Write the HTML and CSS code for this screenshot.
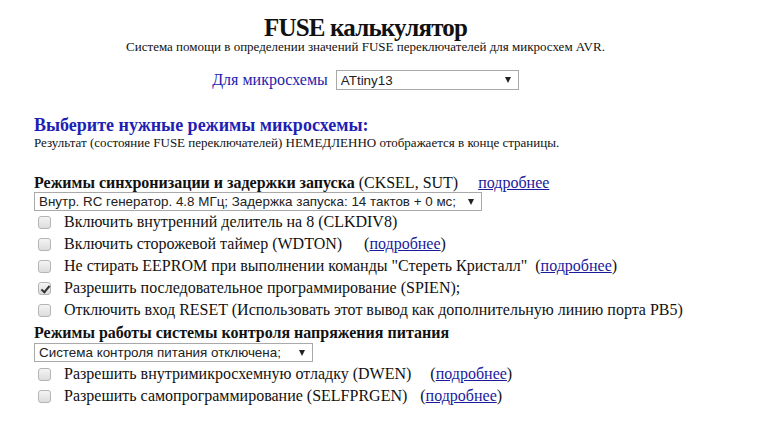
FILE: index.html
```html
<!DOCTYPE html>
<html lang="ru">
<head>
    <meta charset="UTF-8">
    <title>FUSE калькулятор</title>
    <link rel="stylesheet" href="styles.css">
</head>
<body>
    <!-- Header -->
    <div class="header">
        <h1 class="title">FUSE калькулятор</h1>
        <p class="subtitle">Система помощи в определении значений FUSE переключателей для микросхем AVR.</p>

        <div class="chip-row">
            <span class="chip-label">Для микросхемы</span>
            <div class="select-wrap chip-select">
                <select>
                    <option>ATtiny13</option>
                </select>
            </div>
        </div>
    </div>

    <!-- Main -->
    <div class="main">
        <h2 class="section-title">Выберите нужные режимы микросхемы:</h2>
        <p class="note">Результат (состояние FUSE переключателей) НЕМЕДЛЕННО отображается в конце страницы.</p>

        <!-- Clock -->
        <div class="group">
            <div class="group-title"><b>Режимы синхронизации и задержки запуска</b> (CKSEL, SUT) <a href="#" class="more more-head">подробнее</a></div>
            <div class="select-wrap clock-select">
                <select>
                    <option>Внутр. RC генератор. 4.8 МГц; Задержка запуска: 14 тактов + 0 мс;</option>
                </select>
            </div>
            <label class="opt"><input type="checkbox"> Включить внутренний делитель на 8 (CLKDIV8)</label>
            <label class="opt"><input type="checkbox"> Включить сторожевой таймер (WDTON) <span class="more-wrap w1">(<a href="#" class="more">подробнее</a>)</span></label>
            <label class="opt"><input type="checkbox"> Не стирать EEPROM при выполнении команды "Стереть Кристалл" <span class="more-wrap w2">(<a href="#" class="more">подробнее</a>)</span></label>
            <label class="opt"><input type="checkbox" checked> Разрешить последовательное программирование (SPIEN);</label>
            <label class="opt"><input type="checkbox"> Отключить вход RESET (Использовать этот вывод как дополнительную линию порта PB5)</label>
        </div>

        <!-- Brown-out -->
        <div class="group group-bod">
            <div class="group-title"><b>Режимы работы системы контроля напряжения питания</b></div>
            <div class="select-wrap bod-select">
                <select>
                    <option>Система контроля питания отключена;</option>
                </select>
            </div>
            <label class="opt"><input type="checkbox"> Разрешить внутримикросхемную отладку (DWEN) <span class="more-wrap w3">(<a href="#" class="more">подробнее</a>)</span></label>
            <label class="opt"><input type="checkbox"> Разрешить самопрограммирование (SELFPRGEN) <span class="more-wrap w4">(<a href="#" class="more">подробнее</a>)</span></label>
        </div>
    </div>
</body>
</html>
```

FILE: styles.css
```css
* {
    margin: 0;
    padding: 0;
    box-sizing: border-box;
}

body {
    background-color: #ffffff;
    color: #111111;
    font-family: 'Liberation Serif', 'Times New Roman', serif;
    font-size: 16px;
}

/* Header */
.header {
    padding-right: 52px;
}

.title {
    margin-top: 14px;
    text-align: center;
    font-size: 25px;
    line-height: 27px;
    letter-spacing: -0.8px;
    font-weight: bold;
}

.subtitle {
    text-align: center;
    font-size: 13px;
    line-height: 12px;
}

.chip-row {
    display: flex;
    justify-content: center;
    align-items: center;
    gap: 8px;
    margin-top: 17px;
}

.chip-label {
    color: #1c1cae;
    font-size: 16px;
}

/* Selects */
.select-wrap {
    position: relative;
    height: 20px;
}

.select-wrap select {
    appearance: none;
    -webkit-appearance: none;
    width: 100%;
    height: 100%;
    border: 1px solid #a9a9a9;
    border-radius: 0;
    background-color: #ffffff;
    color: #222222;
    font-family: 'Liberation Sans', Arial, sans-serif;
    font-size: 13.4px;
    padding: 0 4px;
}

.select-wrap::after {
    content: '';
    position: absolute;
    right: 8px;
    top: 7px;
    border-left: 3.5px solid transparent;
    border-right: 3.5px solid transparent;
    border-top: 6px solid #222222;
}

.chip-select {
    width: 183px;
}

.clock-select {
    width: 448px;
    height: 19px;
}

.bod-select {
    width: 279px;
    height: 19px;
    margin-top: 1px;
}

/* Main */
.main {
    padding-left: 34px;
}

.section-title {
    margin-top: 25px;
    color: #1f1fb3;
    font-size: 18px;
    line-height: 21px;
    font-weight: bold;
}

.note {
    font-size: 13px;
    line-height: 14px;
}

.group {
    display: flex;
    flex-direction: column;
    align-items: flex-start;
}

.group:first-of-type {
    margin-top: 24px;
}

.group-title {
    font-size: 16px;
    line-height: 18px;
}

.group-bod .group-title {
    margin-top: 3px;
}

.group-bod .opt:first-of-type {
    margin-top: 1px;
}

.opt {
    display: flex;
    align-items: center;
    line-height: 22px;
    white-space: pre;
}

.opt input {
    appearance: none;
    -webkit-appearance: none;
    width: 13px;
    height: 13px;
    margin: 0 9px 0 4px;
    border: 1px solid #b5b5b5;
    border-radius: 3px;
    background: linear-gradient(#f4f4f4, #dcdcdc);
    position: relative;
}

.opt input:checked::after {
    content: '';
    position: absolute;
    left: 4px;
    top: 1px;
    width: 3px;
    height: 7px;
    border-right: 2px solid #333333;
    border-bottom: 2px solid #333333;
    transform: rotate(40deg);
}

.more {
    color: #1a1a9c;
    text-decoration: underline;
}

.more-head {
    margin-left: 16px;
}

.w1 { margin-left: 18px; }
.w2 { margin-left: 4px; }
.w3 { margin-left: 15px; }
.w4 { margin-left: 9px; }
```
